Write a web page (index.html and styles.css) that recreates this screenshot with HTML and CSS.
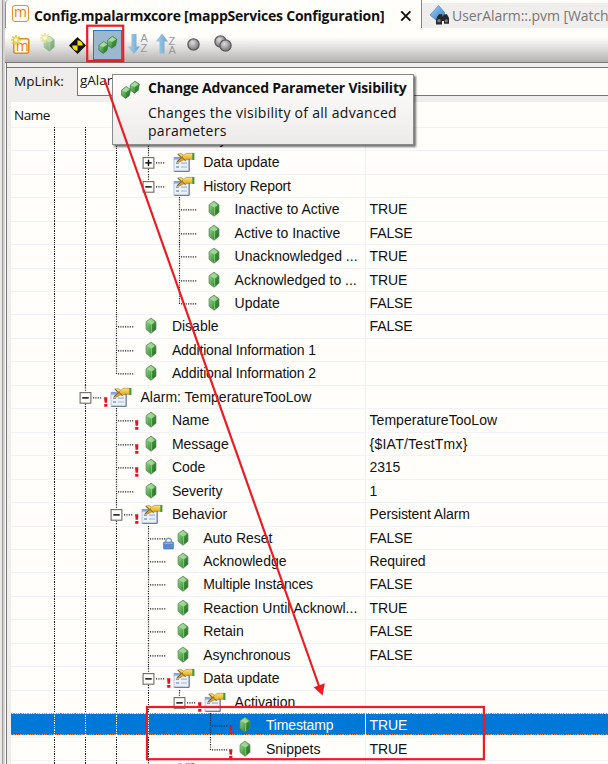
FILE: index.html
```
<!DOCTYPE html>
<html lang="en">
<head>
<meta charset="utf-8">
<title>Config.mpalarmxcore</title>
<link rel="stylesheet" href="styles.css">
</head>
<body>
<svg class="defs" width="0" height="0" aria-hidden="true">
  <defs>
    <linearGradient id="green" x1="0" y1="0" x2="1" y2="1"><stop offset="0" stop-color="#a5dc9d"/><stop offset=".5" stop-color="#55aa4e"/><stop offset="1" stop-color="#2a6c2a"/></linearGradient>
    <linearGradient id="gold" x1="0" y1="0" x2="0" y2="1"><stop offset="0" stop-color="#ffe56a"/><stop offset="1" stop-color="#d58f10"/></linearGradient>
    <linearGradient id="blue" x1="0" y1="0" x2="1" y2="1"><stop offset="0" stop-color="#a8d5f6"/><stop offset="1" stop-color="#2b78c6"/></linearGradient>
    <linearGradient id="sky" x1="0" y1="0" x2="1" y2="0"><stop offset="0" stop-color="#a8cfe9"/><stop offset="1" stop-color="#6ea5cf"/></linearGradient>
    <radialGradient id="ball" cx=".4" cy=".35" r=".65"><stop offset="0" stop-color="#dedede"/><stop offset="1" stop-color="#747474"/></radialGradient>
    <g id="gem">
      <path d="M5.2 0 10.2 3.6V11.2L5.2 15.2 .2 11.2V3.6Z" fill="url(#green)" stroke="#5d8a59" stroke-width=".7"/>
      <path d="M5.2 .8 9 4 5.8 6.6 1.4 4Z" fill="#b4e0aa" opacity=".75"/>
      <path d="M5.8 6.6V14.4L9.7 11V4.2Z" fill="#1f6a20" opacity=".4"/>
      <path d="M5.8 6.6V14" stroke="#a2d59a" stroke-width=".7"/>
    </g>
    <g id="cube">
      <path d="M5 0 9.4 3 8.2 9.2 4.4 12 .2 8.8V3.8Z" fill="url(#green)" stroke="#2c6b2c" stroke-width=".6"/>
      <path d="M5 .7 8.6 3.2 4.8 5.8 1 4Z" fill="#bfe6b5" opacity=".75"/>
      <path d="M4.8 5.8V11.2L7.8 9 8.9 3.6Z" fill="#277a2a" opacity=".55"/>
    </g>
    <g id="v"><path d="M.5 0V23.46" class="dots"/></g>
    <g id="vh"><path d="M.5 0V13" class="dots"/></g>
    <g id="leaf"><path d="M2 12.9H18" class="dots"/><use href="#gem" x="29.8" y="4.1"/></g>
    <g id="folder">
      <path d="M8 12.9H17" class="dots"/>
      <rect x="26" y="7.3" width="15" height="14" fill="#e9f1fb" stroke="#a9b8d2" stroke-width=".8"/>
      <rect x="26" y="7" width="15" height="2.6" fill="#7fa5e4"/>
      <path d="M26.5 21.3H41.2V9" fill="none" stroke="#56607a" stroke-width=".9"/>
      <path d="M28 13.2H31M28 17H31" stroke="#8ba0c6" stroke-width="1.5"/>
      <path d="M33 13.2H39M33 17H39" stroke="#a3b6d4" stroke-width="1.2"/>
      <path d="M29.5 4 33 3.5 36 5.3 38 3.3H45.5V9.3H39.5L37.8 10.2 35 10 31.5 12 29 11.6 33 8Z" fill="url(#gold)" stroke="#8a6616" stroke-width=".5"/>
      <path d="M30 4.2 37.5 10.6M28.6 12 35 6.6" stroke="#7b5c1a" stroke-width=".9"/>
      <path d="M44.3 3H46.4V10H44.3Z" fill="#3d9841"/>
    </g>
    <g id="box"><rect x="-4.9" y="7.6" width="10.8" height="10.6" fill="#fffefb" stroke="#6c6c6c" stroke-width="1.1"/></g>
    <g id="minus"><use href="#box"/><path d="M-2.7 12.9H3.7" stroke="#000" stroke-width="1.4"/></g>
    <g id="plus"><use href="#minus"/><path d="M.5 9.7V16.1" stroke="#000" stroke-width="1.4"/></g>
    <g id="bang"><path d="M19 12.2H22.4L22 17.8H19.6ZM19.2 19H22.4V21.8H19.2Z" fill="#e81123"/></g>
    <g id="lock"><path d="M17.8 16.5V15a2.8 2.8 0 0 1 5.6 0v1.5" fill="none" stroke="#8c9bb5" stroke-width="1.4"/><rect x="15.4" y="16" width="10.2" height="7" rx=".8" fill="#5b8bcd" stroke="#4370ad" stroke-width=".6"/><path d="M16.2 17.2H24.8" stroke="#9fc0ec"/></g>
    <g id="star"><path d="M5 0V10M0 5H10M1.3 1.3 8.7 8.7M8.7 1.3 1.3 8.7" stroke="#e3cf45" stroke-width="1.7"/><circle cx="5" cy="5" r="1.7" fill="#fffde0"/></g>
    <g id="sphere"><circle cx="6.5" cy="6.5" r="5.6" fill="url(#ball)" stroke="#5c5c5c" stroke-width="1.3"/></g>
  </defs>
</svg>

<div class="app">
  <div class="rail"></div>
  <main class="main">
    <header class="tabs">
      <div class="tab active">
        <span class="mapp">m</span>
        <span class="tab-title">Config.mpalarmxcore [mappServices Configuration]</span>
        <svg class="close" width="12" height="12"><path d="M1.2 1.4 10.4 10.6M10.4 1.4 1.2 10.6" stroke="#111" stroke-width="1.9"/></svg>
      </div>
      <div class="tab other">
        <svg width="20" height="21"><path d="M0 10 8.6 .6 15 8 7 16Z" fill="url(#blue)" stroke="#3977b5" stroke-width=".6"/><path d="M7 12 9 9.3H12L12.7 11.5 14 9.3H17L19 13V18.7H14V16H12V19.4H6V15Z" fill="#26292b"/><circle cx="9" cy="15.8" r="1.8" fill="#777f82"/><circle cx="16.3" cy="15.8" r="1.6" fill="#777f82"/></svg>
        <span class="other-title">UserAlarm::.pvm [Watch]</span>
      </div>
    </header>

    <nav class="toolbar">
      <svg class="t-new" width="20" height="22"><rect x="2.8" y="4.8" width="15" height="14.5" rx="2" fill="#fff8ec" stroke="#e08a1c" stroke-width="1.5"/><text x="4.8" y="16.5" class="m-letter">m</text><use href="#star" x="0" y="1"/></svg>
      <svg class="t-add" width="17" height="20" opacity=".55"><use href="#gem" x="5" y="3"/><use href="#star" x="1" y="0"/></svg>
      <svg class="t-nav" width="17" height="17"><path d="M8.5 0 17 8.5 8.5 17 0 8.5Z" fill="#111"/><path d="M8.5 8.5V3.2A5.3 5.3 0 0 1 13.8 8.5ZM8.5 8.5H3.2A5.3 5.3 0 0 0 8.5 13.8Z" fill="#f8df00"/></svg>
      <div class="t-toggle"><svg width="20" height="20"><use href="#cube" x=".7" y="6.4"/><use href="#cube" x="9.4" y="1.2"/></svg></div>
      <svg class="t-sort" width="22" height="22"><path d="M4.5 1H9.5V13.5H13L7 21 .6 13.5H4.5Z" fill="url(#sky)"/><text x="13.6" y="9" class="az">A</text><text x="13.6" y="18.5" class="az">Z</text></svg>
      <svg class="t-sort up" width="22" height="22"><path d="M4.5 20.5H9.5V8.5H13L7 .5 .6 8.5H4.5Z" fill="url(#sky)"/><text x="13.6" y="12" class="az">Z</text><text x="13.6" y="21.2" class="az">A</text></svg>
      <svg class="t-ball" width="14" height="14"><use href="#sphere"/></svg>
      <svg class="t-balls" width="20" height="18"><use href="#sphere"/><use href="#sphere" x="5" y="4"/></svg>
    </nav>

    <section class="panel">
      <div class="link-row"><label>MpLink:</label><div class="field">gAlarmXCore</div></div>
      <div class="tree">
        <div class="head">Name</div>
        <div class="row"><div class="name"><i></i><i></i><i></i><svg><use href="#v"/></svg><span>Asynchronous</span></div><div class="val"></div></div>
        <div class="row"><div class="name"><i></i><i></i><i></i><svg><use href="#v"/><use href="#plus"/><use href="#folder"/></svg><span>Data update</span></div><div class="val"></div></div>
        <div class="row"><div class="name"><i></i><i></i><i></i><svg><use href="#vh"/><use href="#minus"/><use href="#folder"/></svg><span class="snug">History Report</span></div><div class="val"></div></div>
        <div class="row"><div class="name"><i></i><i></i><i></i><i class="no"></i><svg><use href="#v"/><use href="#leaf"/></svg><span>Inactive to Active</span></div><div class="val">TRUE</div></div>
        <div class="row"><div class="name"><i></i><i></i><i></i><i class="no"></i><svg><use href="#v"/><use href="#leaf"/></svg><span>Active to Inactive</span></div><div class="val">FALSE</div></div>
        <div class="row"><div class="name"><i></i><i></i><i></i><i class="no"></i><svg><use href="#v"/><use href="#leaf"/></svg><span>Unacknowledged ...</span></div><div class="val">TRUE</div></div>
        <div class="row"><div class="name"><i></i><i></i><i></i><i class="no"></i><svg><use href="#v"/><use href="#leaf"/></svg><span>Acknowledged to ...</span></div><div class="val">TRUE</div></div>
        <div class="row"><div class="name"><i></i><i></i><i></i><i class="no"></i><svg><use href="#vh"/><use href="#leaf"/></svg><span>Update</span></div><div class="val">FALSE</div></div>
        <div class="row"><div class="name"><i></i><i></i><svg><use href="#v"/><use href="#leaf"/></svg><span>Disable</span></div><div class="val">FALSE</div></div>
        <div class="row"><div class="name"><i></i><i></i><svg><use href="#v"/><use href="#leaf"/></svg><span class="snug">Additional Information 1</span></div><div class="val"></div></div>
        <div class="row"><div class="name"><i></i><i></i><svg><use href="#vh"/><use href="#leaf"/></svg><span class="snug">Additional Information 2</span></div><div class="val"></div></div>
        <div class="row"><div class="name"><i></i><svg><use href="#v"/><use href="#minus"/><use href="#folder"/><use href="#bang"/></svg><span>Alarm: TemperatureTooLow</span></div><div class="val"></div></div>
        <div class="row"><div class="name"><i></i><i></i><svg><use href="#v"/><use href="#leaf"/><use href="#bang"/></svg><span>Name</span></div><div class="val temp">TemperatureTooLow</div></div>
        <div class="row"><div class="name"><i></i><i></i><svg><use href="#v"/><use href="#leaf"/><use href="#bang"/></svg><span>Message</span></div><div class="val wide">{$IAT/TestTmx}</div></div>
        <div class="row"><div class="name"><i></i><i></i><svg><use href="#v"/><use href="#leaf"/><use href="#bang"/></svg><span>Code</span></div><div class="val">2315</div></div>
        <div class="row"><div class="name"><i></i><i></i><svg><use href="#v"/><use href="#leaf"/></svg><span>Severity</span></div><div class="val">1</div></div>
        <div class="row"><div class="name"><i></i><i></i><svg><use href="#v"/><use href="#minus"/><use href="#folder"/><use href="#bang"/></svg><span>Behavior</span></div><div class="val">Persistent Alarm</div></div>
        <div class="row"><div class="name"><i></i><i></i><i></i><svg><use href="#v"/><use href="#leaf"/><use href="#lock"/></svg><span>Auto Reset</span></div><div class="val">FALSE</div></div>
        <div class="row"><div class="name"><i></i><i></i><i></i><svg><use href="#v"/><use href="#leaf"/></svg><span>Acknowledge</span></div><div class="val">Required</div></div>
        <div class="row"><div class="name"><i></i><i></i><i></i><svg><use href="#v"/><use href="#leaf"/></svg><span class="snug">Multiple Instances</span></div><div class="val">FALSE</div></div>
        <div class="row"><div class="name"><i></i><i></i><i></i><svg><use href="#v"/><use href="#leaf"/></svg><span>Reaction Until Acknowl...</span></div><div class="val">TRUE</div></div>
        <div class="row"><div class="name"><i></i><i></i><i></i><svg><use href="#v"/><use href="#leaf"/></svg><span>Retain</span></div><div class="val">FALSE</div></div>
        <div class="row"><div class="name"><i></i><i></i><i></i><svg><use href="#v"/><use href="#leaf"/></svg><span class="snug">Asynchronous</span></div><div class="val">FALSE</div></div>
        <div class="row"><div class="name"><i></i><i></i><i></i><svg><use href="#v"/><use href="#minus"/><use href="#folder"/><use href="#bang"/></svg><span>Data update</span></div><div class="val"></div></div>
        <div class="row"><div class="name"><i></i><i></i><i></i><i></i><svg><use href="#vh"/><use href="#minus"/><use href="#folder"/><use href="#bang"/></svg><span>Activation</span></div><div class="val"></div></div>
        <div class="row selected"><div class="name"><i></i><i></i><i></i><i></i><i class="no"></i><svg><use href="#v"/><use href="#leaf"/><use href="#bang"/></svg><span class="snug">Timestamp</span></div><div class="val">TRUE</div></div>
        <div class="row"><div class="name"><i></i><i></i><i></i><i></i><i class="no"></i><svg><use href="#vh"/><use href="#leaf"/><use href="#bang"/></svg><span>Snippets</span></div><div class="val">TRUE</div></div>
        <div class="row"><div class="name"><i></i><i></i><i></i><svg><use href="#v"/><use href="#folder"/></svg></div><div class="val"></div></div>
      </div>
    </section>
  </main>
</div>

<aside class="tooltip">
  <svg width="20" height="20"><use href="#cube" x=".2" y="6.4"/><use href="#cube" x="9" y="1.2"/></svg>
  <div><h1>Change Advanced Parameter Visibility</h1><p>Changes the visibility of all advanced<br>parameters</p></div>
</aside>

<svg class="marks" width="608" height="764">
  <rect x="87.2" y="25.7" width="36" height="35.4"/>
  <rect x="147" y="707" width="336.9" height="52.2"/>
  <path d="M104.5 79.5 319 686"/>
  <path class="tip" d="M322.6 695.5 313.6 687.3 324.8 683.3Z"/>
</svg>
</body>
</html>
```
FILE: styles.css
```
* { box-sizing: border-box; }
body {
  margin: 0;
  width: 608px;
  height: 764px;
  overflow: hidden;
  background: #fffefb;
  color: #111;
  font: 14px "Liberation Sans", Arial, sans-serif;
}
.defs { position: absolute; }
.app { display: flex; height: 764px; }
.rail {
  width: 5px;
  flex: none;
  background: linear-gradient(90deg, #e9e8e6 2px, #999 2px 3px, #d4d3d1 3px);
}
.main { flex: 1; min-width: 0; display: flex; flex-direction: column; }

.tabs { display: flex; height: 29px; flex: none; }
.tab { display: flex; align-items: center; white-space: nowrap; font-family: "Open Sans", sans-serif; }
.tab.active {
  width: 416px;
  flex: none;
  padding-left: 6px;
  border-left: 1px solid #8d8d8d;
  border-top-left-radius: 4px;
  height: 28px;
}
.mapp {
  width: 17px;
  height: 17px;
  border: 1.5px solid #dc9136;
  border-radius: 3px;
  background: #fffaf2;
  color: #f17b16;
  font: 14px/11px "Open Sans", sans-serif;
  text-align: center;
  margin-top: -1px;
}
.tab-title { font-weight: 700; font-size: 14px; margin-left: 5px; width: 351px; margin-top: 2px; letter-spacing: -.22px; }
.close { margin-left: 15px; margin-top: 3px; }
.tab.other {
  flex: 1;
  min-width: 0;
  overflow: hidden;
  height: 28px;
  padding-left: 8px;
  border-left: 1px solid #888;
  background: linear-gradient(#fffefb 3px, #efeeed 3px);
  color: #777;
}
.tab.other svg { flex: none; margin-top: 2px; }
.other-title { margin-left: 2px; margin-top: 2px; font-size: 14px; letter-spacing: -.07px; }

.toolbar {
  display: flex;
  align-items: center;
  height: 34px;
  flex: none;
  padding: 0 0 1px 6px;
  border-bottom: 1px solid #777;
  background: linear-gradient(#fffefb 8px, #dddcdb 20px, #b3b2b0);
}
.m-letter { font: 14px "Open Sans", sans-serif; fill: #f17b16; }
.az { font: 11px "Liberation Sans", sans-serif; fill: #999; }
.t-add { margin-left: 8px; margin-top: -4px; }
.t-nav { margin-left: 13px; }
.t-toggle {
  width: 29px;
  height: 30px;
  margin-left: 7px;
  border: 1.5px solid #1a7bcb;
  background: #9bb8cf;
  display: grid;
  place-items: center;
}
.t-sort { margin-left: 5px; margin-top: -2px; }
.t-sort.up { margin-left: 6px; }
.t-ball { margin-left: 10px; }
.t-balls { margin-left: 13px; margin-top: -2px; }

.panel {
  flex: 1;
  margin-left: 1px;
  border-left: 1.5px solid #777;
  background: #efeeec;
  padding: 4px 0 0 4px;
  min-height: 0;
}
.link-row {
  display: flex;
  height: 35px;
  margin-left: -4px;
  padding-left: 7px;
  border-top: 1px solid #777;
  font: 13.5px "Open Sans", sans-serif;
}
.link-row label { width: 63px; padding-top: 4px; }
.field {
  flex: 1;
  height: 28px;
  border: 1px solid #777;
  border-width: 0 0 1.5px 1.5px;
  background: #fffefb;
  padding: 3px 0 0 2px;
}
.tree { background: #fffefb; height: 663px; overflow: hidden; }
.head { height: 24.84px; padding: 4px 0 0 3px; font: 13.5px "Open Sans", sans-serif; letter-spacing: -.5px; }
.row { display: flex; height: 23.46px; border-top: 1px solid #f1f3f6; }
.name {
  width: 355px;
  flex: none;
  display: flex;
  padding-left: 42.6px;
  border-right: 1px solid #eff1f4;
  white-space: nowrap;
}
.name i {
  width: 31.35px;
  flex: none;
  margin-top: -1px;
  height: 23.46px;
  background: repeating-linear-gradient(#222 0 1.17px, transparent 1.17px 2.346px) 0 0 / 1.3px 100% no-repeat;
}
.name i.no { background: none; }
.name svg { width: 55.6px; height: 23.46px; flex: none; margin-top: -1px; overflow: visible; }
.dots { stroke: #222; stroke-width: 1.2; stroke-dasharray: 1.17 1.176; fill: none; }
.name span, .val { line-height: 23px; }
.snug { letter-spacing: -.13px; }
.val { padding-left: 3.5px; flex: 1; letter-spacing: -.1px; }
.val.wide { letter-spacing: .25px; }
.val.temp { letter-spacing: .05px; }
.selected { height: 23.46px; color: #fff; background: linear-gradient(#fffefb .8px, #0078d7 .8px 21.7px, #fffefb 21.7px); border-top: 0; position: relative; }
.selected .name i, .selected .name svg { margin-top: 0; }
.selected .name span, .selected .val { padding-top: 1px; }
.selected .name i { background-image: repeating-linear-gradient(#fff 0 1.17px, transparent 1.17px 2.346px); }
.selected .name i.no { background: none; }
.selected .dots { stroke: #fff; }
.selected .name { border-right-color: #fff; }
.selected::after {
  content: "";
  position: absolute;
  inset: 0 0 1.5px;
  background:
    repeating-linear-gradient(90deg, #e58b3f 0 1.2px, transparent 1.2px 2.35px) 0 0 / 100% 1.2px no-repeat,
    repeating-linear-gradient(90deg, #e58b3f 0 1.2px, transparent 1.2px 2.35px) 0 100% / 100% 1.2px no-repeat;
}

.tooltip {
  position: absolute;
  left: 112px;
  top: 74px;
  width: 302px;
  height: 71px;
  display: flex;
  padding: 5px 0 0 8px;
  border: 1px solid #8a8a8a;
  background: linear-gradient(#fffefd, #ecebea);
  box-shadow: 2px 2px 2px rgba(0, 0, 0, .55);
  font-family: "Open Sans", sans-serif;
  white-space: nowrap;
}
.tooltip svg { flex: none; }
.tooltip h1 { margin: -1px 0 0 7px; font: 700 14px/18px "Open Sans", sans-serif; letter-spacing: -.22px; }
.tooltip p { margin: 7px 0 0 7px; font-size: 14px; line-height: 17.5px; letter-spacing: .28px; }

.marks { position: absolute; left: 0; top: 0; fill: none; stroke: #ec1c24; stroke-width: 2.2; }
.marks .tip { fill: #ec1c24; stroke: none; }
```
